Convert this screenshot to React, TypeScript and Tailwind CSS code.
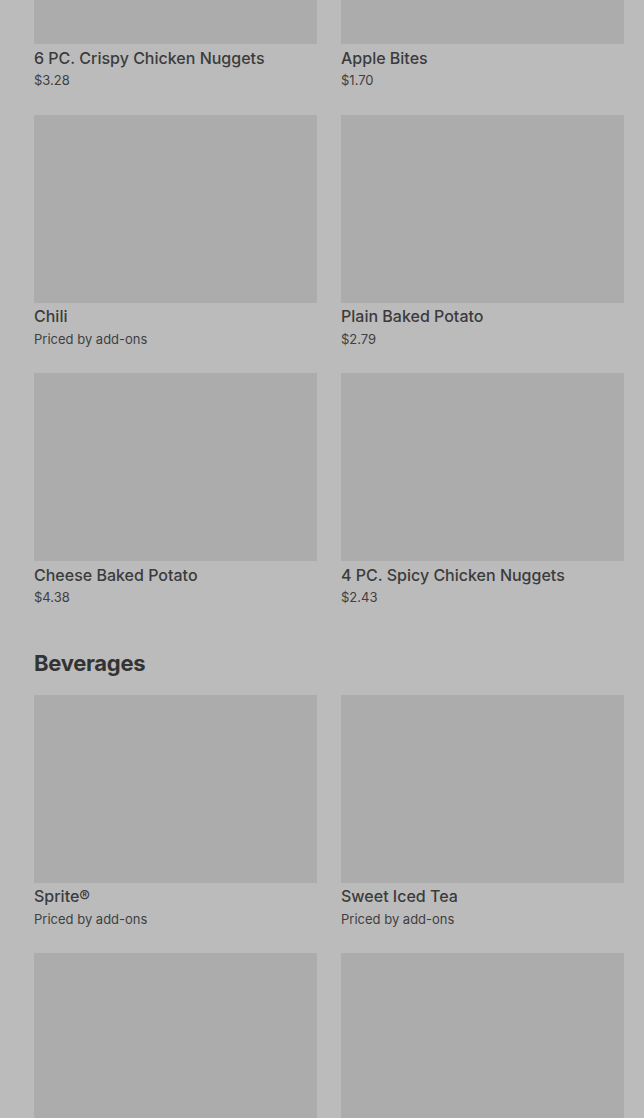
import React from "react";

type Item = { name: string; price: string };

const sides: Item[] = [
  { name: "6 PC. Crispy Chicken Nuggets", price: "$3.28" },
  { name: "Apple Bites", price: "$1.70" },
  { name: "Chili", price: "Priced by add-ons" },
  { name: "Plain Baked Potato", price: "$2.79" },
  { name: "Cheese Baked Potato", price: "$4.38" },
  { name: "4 PC. Spicy Chicken Nuggets", price: "$2.43" },
];

const beverages: Item[] = [
  { name: "Sprite®", price: "Priced by add-ons" },
  { name: "Sweet Iced Tea", price: "Priced by add-ons" },
];

function Card({ item }: { item: Item }) {
  return (
    <div className="flex flex-col">
      <div className="h-[188px] w-full bg-[#acacac]" />
      <div className="mt-[3.5px] text-[16px] leading-[20px] font-medium text-[#3b3b3b]">
        {item.name}
      </div>
      <div className="mt-[3.5px] text-[13px] leading-[19.5px] text-[#3f3f3f]">
        {item.price}
      </div>
    </div>
  );
}

export default function App() {
  return (
    <div
      className="h-[1118px] w-[644px] overflow-hidden bg-[#bbbbbb]"
      style={{ fontFamily: "Inter, 'Noto Sans', sans-serif" }}
    >
      <div className="-mt-[144px] pl-[34px] pr-[20px]">
        <div className="grid grid-cols-2 gap-x-[24px] gap-y-[24px]">
          {sides.map((it) => (
            <Card key={it.name} item={it} />
          ))}
        </div>
        <h2 className="mt-[41px] mb-[18px] text-[22px] leading-[28px] font-bold tracking-[-0.3px] text-[#333333]">
          Beverages
        </h2>
        <div className="grid grid-cols-2 gap-x-[24px] gap-y-[24px]">
          {beverages.map((it) => (
            <Card key={it.name} item={it} />
          ))}
          <div className="h-[188px] w-full bg-[#acacac]" />
          <div className="h-[188px] w-full bg-[#acacac]" />
        </div>
      </div>
    </div>
  );
}
